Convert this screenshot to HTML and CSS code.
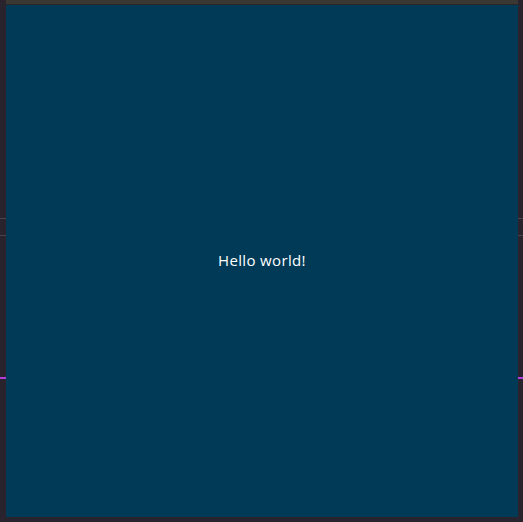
FILE: index.html
```html
<!DOCTYPE html>
<html>
<head>
<meta charset="utf-8">
<link rel="stylesheet" href="styles.css">
</head>
<body>
<div class="frame">
  <div class="topbar"></div>
  <div class="panel">
    <span class="greeting">Hello world!</span>
  </div>
</div>
</body>
</html>
```
FILE: styles.css
```css
html, body {
  margin: 0;
  padding: 0;
  width: 523px;
  height: 522px;
  overflow: hidden;
}
body {
  background-color: #28232d;
  background-image:
    linear-gradient(to bottom,
      transparent 218px, #4a4450 218px, #4a4450 219px, transparent 219px,
      transparent 235px, #4a4450 235px, #4a4450 236px, transparent 236px,
      transparent 377px, #b23bdc 377px, #b23bdc 379px, transparent 379px);
}
.frame {
  display: flex;
  flex-direction: column;
  margin-left: 6px;
  width: 512px;
}
.topbar {
  height: 4px;
  background: #3b3733;
  border-bottom: 1px solid #2a2624;
}
.panel {
  height: 512px;
  background: #003a57;
  display: flex;
  align-items: center;
  justify-content: center;
}
.greeting {
  font-family: "Open Sans", sans-serif;
  font-size: 15px;
  font-weight: 500;
  letter-spacing: 0.35px;
  color: #ffffff;
  margin-top: -2px;
}
```
